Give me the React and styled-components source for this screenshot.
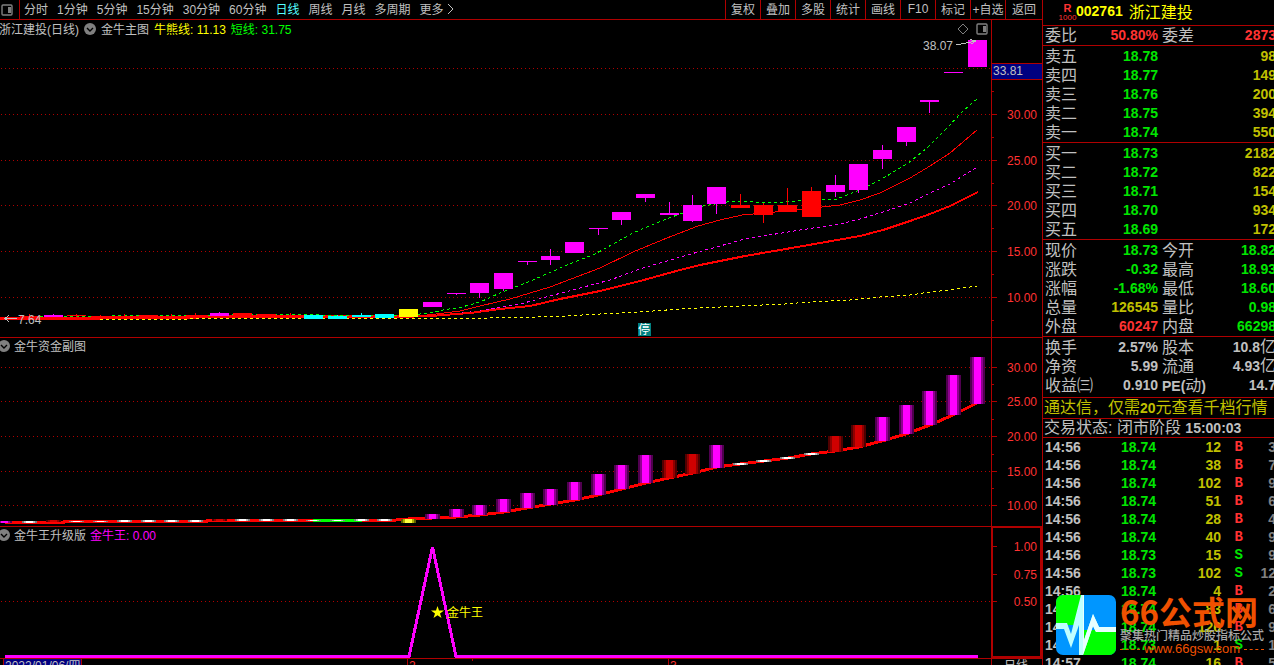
import React from 'react';
import styled, { createGlobalStyle } from 'styled-components';

const GlobalStyle = createGlobalStyle`
  * { box-sizing: border-box; }

  body {
    margin: 0;
    background: #000;
    color: #c0c0c0;
    font: 400 12px "Liberation Sans", "Noto Sans CJK SC", sans-serif;
    overflow: hidden;
  }

  button {
    border: 0;
    padding: 0;
    background: none;
    color: inherit;
    font: inherit;
    white-space: nowrap;
    cursor: pointer;
  }
`;

const LINE = '#b00000';
const RED = '#ff3232';
const GREEN = '#00e600';
const YELLOW = '#c0c000';
const MAGENTA = '#ff00ff';

const Page = styled.div`
  display: grid;
  grid-template-columns: minmax(0, 1fr) 232px;
  grid-template-rows: minmax(0, 1fr);
  height: 100vh;
  overflow: hidden;
`;

const Main = styled.main`
  min-width: 0;
`;

const TopBar = styled.header`
  display: flex;
  height: 20px;
  border-bottom: 1px solid ${LINE};
`;

const ToggleButton = styled.button`
  display: flex;
  align-items: center;
  width: 20px;
  padding-left: 1px;
  border-right: 1px solid ${LINE};
`;

const Periods = styled.nav`
  display: flex;
  flex: 1;
  gap: 9px;
  padding: 0 0 2px 4px;
`;

const PeriodButton = styled.button`
  color: ${({ $active }) => ($active ? '#54ffff' : 'inherit')};
`;

const MoreButton = styled.button`
  display: flex;
  align-items: center;
  gap: 3px;
`;

const Tools = styled.nav`
  display: flex;
`;

const ToolButton = styled.button`
  width: 35px;
  padding-bottom: 2px;
  border-left: 1px solid ${LINE};

  &:last-child { width: 37px; }
`;

const Panel = styled.section`
  position: relative;
  border-bottom: 1px solid ${LINE};
`;

const Chart = styled.svg`
  display: block;
  width: 100%;
  height: auto;
  font-size: 12px;
`;

const Legend = styled.div`
  position: absolute;
  top: 0;
  left: ${({ $tall }) => ($tall ? -1 : -2)}px;
  display: flex;
  align-items: center;
  gap: ${({ $tall }) => ($tall ? 5 : 4)}px;
  height: ${({ $tall }) => ($tall ? 18 : 16)}px;
  white-space: nowrap;

  span { padding-bottom: 2px; }
`;

const LegendValue = styled.span`
  color: ${({ $color }) => $color};
`;

const LegendButton = styled.button`
  display: flex;
`;

const ChartTools = styled.div`
  position: absolute;
  top: 3px;
  right: 54px;
  display: flex;
  gap: 7px;
`;

const Side = styled.aside`
  position: relative;
  border-left: 1px solid ${LINE};
  overflow: hidden;
  white-space: nowrap;
`;

const StockHead = styled.h1`
  display: flex;
  align-items: center;
  height: 26px;
  margin: 0;
  padding: 0 0 3px 16px;
  border-bottom: 1px solid ${LINE};
  color: #ff0;
  font-size: 16px;
  font-weight: 400;
`;

const Rank = styled.span`
  display: flex;
  flex-direction: column;
  align-items: center;
  width: 17px;
  padding-top: 4px;
  color: ${RED};
  font-size: 8px;
  line-height: 9px;

  b {
    font-size: 11px;
    font-weight: 700;
  }
`;

const Code = styled.b`
  margin-right: 6px;
  font-size: 14px;
  font-weight: 700;
`;

const QuoteTable = styled.table`
  table-layout: fixed;
  width: calc(100% + 2px);
  border-collapse: collapse;
  font-size: 16px;

  tr { height: 19px; }

  th, td {
    padding: 0;
    line-height: 19px;
  }

  th {
    width: 50px;
    padding-left: 2px;
    font-weight: 400;
    text-align: left;
  }

  td + th { padding-left: 4px; }
`;

const QuoteBlock = styled.section`
  padding: ${({ $pad }) => $pad || '0'};
  border-bottom: 1px solid ${LINE};
`;

const Value = styled.td`
  width: ${({ $first }) => ($first ? '65px' : 'auto')};
  color: ${({ $color }) => $color || 'inherit'};
  font-size: 14px;
  font-weight: 700;
  text-align: right;

  span {
    font-size: 16px;
    font-weight: 400;
    line-height: 0;
  }
`;

const Latin = styled.b`
  font-size: 14px;
  font-weight: 700;
  line-height: 0;
`;

const Notice = styled.a`
  display: block;
  height: 21px;
  padding-left: 1px;
  border-bottom: 1px solid ${LINE};
  color: ${YELLOW};
  font-size: 16px;
  line-height: 19px;
  text-decoration: none;
`;

const Status = styled.p`
  height: 19px;
  margin: 0;
  padding-left: 1px;
  border-bottom: 1px solid ${LINE};
  font-size: 16px;
  line-height: 17px;
`;

const TradeTable = styled.table`
  table-layout: fixed;
  width: calc(100% + 2px);
  border-collapse: collapse;
  font-size: 14px;
  font-weight: 700;

  tr { height: 18px; }

  td {
    padding: 0;
    line-height: 18px;
    text-align: right;
  }
`;

const TimeCell = styled.td`
  && {
    width: 50px;
    padding-left: 2px;
    text-align: left;
  }
`;

const PriceCell = styled.td`
  width: 63px;
  color: ${GREEN};
`;

const VolumeCell = styled.td`
  width: 65px;
  color: ${YELLOW};
`;

const SideCell = styled.td`
  width: 22px;
  color: ${({ $buy }) => ($buy ? RED : GREEN)};
  font-family: "Liberation Mono", monospace;
`;

const CountCell = styled.td`
  color: #808080;
`;

const Watermark = styled.div`
  position: absolute;
  bottom: 10px;
  left: 13px;
  display: flex;
  gap: 4px;
`;

const Brand = styled.div`
  display: flex;
  flex-direction: column;
  color: #f05000;
`;

const BrandName = styled.strong`
  height: 34px;
  font: 700 33px/32px "Noto Sans CJK SC", sans-serif;
`;

const BrandLine = styled.span`
  height: 14px;
  color: #a8a8a8;
  font-weight: 500;
  line-height: 14px;
`;

const BrandUrl = styled.span`
  display: flex;
  align-items: center;
  gap: 4px;
  font-size: 13px;
  line-height: 12px;

  &::before, &::after {
    content: "";
    width: 20px;
    border-top: 1px dashed #f05000;
  }
`;

const periods = ['分时', '1分钟', '5分钟', '15分钟', '30分钟', '60分钟', '日线', '周线', '月线', '多周期'];
const tools = ['复权', '叠加', '多股', '统计', '画线', 'F10', '标记', '+自选', '返回'];

// x, body top, body bottom, wick top, wick bottom, colour
const candles = [
  [-4, 317, 319, 317, 319, 'red'],
  [20, 316, 319, 314, 319, 'red'],
  [44, 315, 317, 314, 317, MAGENTA],
  [67, 315, 316, 314, 318, 'red'],
  [91, 316, 318, 315, 318, 'red'],
  [115, 316, 318, 314, 318, 'red'],
  [139, 315, 318, 315, 318, 'red'],
  [162, 316, 318, 314, 318, 'red'],
  [186, 315, 318, 313, 318, 'red'],
  [210, 313, 316, 312, 316, MAGENTA],
  [233, 313, 318, 313, 318, 'red'],
  [257, 314, 318, 314, 318, 'red'],
  [281, 315, 318, 313, 318, 'red'],
  [304, 315, 319, 315, 319, '#0ff'],
  [328, 316, 319, 315, 319, '#0ff'],
  [352, 315, 317, 313, 317, '#0ff'],
  [375, 314, 318, 314, 318, '#0ff'],
  [399, 309, 317, 309, 317, '#ff0'],
  [423, 302, 307, 302, 307, MAGENTA],
  [447, 293, 294, 293, 295, MAGENTA],
  [470, 283, 293, 283, 298, MAGENTA],
  [494, 273, 289, 273, 291, MAGENTA],
  [518, 261, 262, 261, 265, MAGENTA],
  [541, 256, 260, 249, 265, MAGENTA],
  [565, 242, 253, 242, 253, MAGENTA],
  [589, 228, 229, 228, 235, MAGENTA],
  [612, 212, 220, 212, 225, MAGENTA],
  [636, 194, 198, 194, 202, MAGENTA],
  [660, 213, 215, 202, 215, MAGENTA],
  [683, 205, 221, 195, 222, MAGENTA],
  [707, 187, 204, 187, 214, MAGENTA],
  [731, 205, 208, 194, 208, 'red'],
  [754, 205, 215, 203, 223, 'red'],
  [778, 205, 212, 188, 212, 'red'],
  [802, 191, 217, 187, 217, 'red'],
  [826, 185, 192, 175, 197, MAGENTA],
  [849, 164, 190, 164, 193, MAGENTA],
  [873, 150, 159, 145, 169, MAGENTA],
  [897, 127, 142, 127, 146, MAGENTA],
  [920, 100, 102, 100, 113, MAGENTA],
  [944, 72, 73, 72, 73, MAGENTA],
  [968, 40, 67, 40, 67, MAGENTA],
];

// x, top, bottom, gradient name
const bars = [
  [-3, 521, 523, 'm'], [22, 521, 523, 'w'], [46, 520, 522, 'r'], [69, 521, 522, 'w'],
  [93, 521, 522, 'w'], [117, 520, 522, 'w'], [141, 520, 522, 'w'], [164, 520, 522, 'w'],
  [188, 520, 522, 'w'], [212, 519, 521, 'r'], [235, 519, 521, 'w'], [259, 519, 521, 'w'],
  [283, 519, 521, 'w'], [306, 520, 521, 'w'], [330, 520, 521, 'w'], [354, 519, 521, 'w'],
  [377, 519, 521, 'w'], [401, 519, 523, 'y'], [425, 514, 519, 'm'], [449, 509, 517, 'm'],
  [472, 505, 515, 'm'], [496, 499, 512, 'm'], [520, 493, 508, 'm'], [543, 489, 505, 'm'],
  [567, 482, 500, 'm'], [591, 474, 495, 'm'], [614, 465, 489, 'm'], [638, 455, 483, 'm'],
  [662, 460, 478, 'r'], [685, 454, 474, 'r'], [709, 445, 468, 'm'], [733, 463, 465, 'w'],
  [756, 460, 462, 'w'], [780, 457, 459, 'w'], [804, 453, 455, 'w'], [828, 436, 452, 'r'],
  [851, 425, 447, 'r'], [875, 417, 441, 'm'], [899, 405, 434, 'm'], [922, 391, 425, 'm'],
  [946, 375, 415, 'm'], [970, 357, 404, 'm'],
];

const gradients = {
  m: ['#500050', '#900090', '#ff00ff'],
  r: ['#500000', '#900000', '#d00000'],
  w: ['#808080', '#c0c0c0', '#ffffff'],
  y: ['#606000', '#b0b000', '#ffff40'],
};

const asks = [['卖五', '18.78', '98'], ['卖四', '18.77', '149'], ['卖三', '18.76', '200'], ['卖二', '18.75', '394'], ['卖一', '18.74', '550']];
const bids = [['买一', '18.73', '2182'], ['买二', '18.72', '822'], ['买三', '18.71', '154'], ['买四', '18.70', '934'], ['买五', '18.69', '172']];

const stats = [
  ['现价', '18.73', GREEN, '今开', '18.82', GREEN],
  ['涨跌', '-0.32', GREEN, '最高', '18.93', GREEN],
  ['涨幅', '-1.68%', GREEN, '最低', '18.60', GREEN],
  ['总量', '126545', YELLOW, '量比', '0.98', GREEN],
  ['外盘', '60247', RED, '内盘', '66298', GREEN],
];

const trades = [
  ['14:56', '18.74', 12, 'B', 3],
  ['14:56', '18.74', 38, 'B', 7],
  ['14:56', '18.74', 102, 'B', 9],
  ['14:56', '18.74', 51, 'B', 6],
  ['14:56', '18.74', 28, 'B', 4],
  ['14:56', '18.74', 40, 'B', 9],
  ['14:56', '18.73', 15, 'S', 9],
  ['14:56', '18.73', 102, 'S', 12],
  ['14:56', '18.74', 4, 'B', 2],
  ['14:56', '18.74', 83, 'B', 6],
  ['14:56', '18.74', 126, 'B', 9],
  ['14:56', '18.73', 1, 'S', 1],
  ['14:57', '18.74', 16, 'B', 5],
];

const SplitIcon = () => (
  <svg width="12" height="12" viewBox="0 0 12 12" aria-hidden="true">
    <rect x="1" y="1" width="10" height="10" rx="1" fill="none" stroke="#808080" strokeWidth="1.4" />
    <rect x="7" y="3" width="3" height="6" fill="#808080" />
  </svg>
);

const FoldButton = () => (
  <LegendButton aria-label="fold">
    <svg width="12" height="12" viewBox="0 0 12 12">
      <circle cx="6" cy="6" r="6" fill="#808080" />
      <path d="M3 5l3 3 3-3" fill="none" stroke="#000" strokeWidth="1.4" />
    </svg>
  </LegendButton>
);

const GridLines = ({ rows }) => rows.map((y) => (
  <line key={y} x1="1" x2="991" y1={y + 0.5} y2={y + 0.5} stroke={LINE} strokeDasharray="1 3" shapeRendering="crispEdges" />
));

const Axis = ({ top, bottom, labels, minors }) => (
  <g>
    <g stroke={LINE} shapeRendering="crispEdges">
      <line x1="991.5" x2="991.5" y1={top} y2={bottom} />
      {labels.map(([y]) => <line key={y} x1="992" x2="997" y1={y + 0.5} y2={y + 0.5} />)}
      {minors.map((y) => <line key={y} x1="992" x2="994" y1={y + 0.5} y2={y + 0.5} />)}
    </g>
    {labels.map(([y, text]) => <text key={y} x="1037" y={y + 5} textAnchor="end" fill={RED}>{text}</text>)}
  </g>
);

const MainChart = () => (
  <Chart viewBox="0 20 1042 317">
    <GridLines rows={[68, 114, 160, 205, 251, 297]} />
    <Axis
      top={20}
      bottom={337}
      labels={[[114, '30.00'], [160, '25.00'], [205, '20.00'], [251, '15.00'], [297, '10.00']]}
      minors={[91, 137, 183, 228, 274, 320]}
    />
    <g fill="none" shapeRendering="crispEdges">
      <polyline stroke="red" points="408,317 436,314 460,311 480,306 510,299 550,287 600,268 633,252 667,238 698,226 720,220 742,215 775,212 822,207 840,205 860,200 880,193 910,178 930,166 950,153 977,130" />
      <polyline stroke={MAGENTA} strokeDasharray="3 3" points="408,317 450,314 480,311 520,304 550,296 580,288 610,280 640,269 670,260 698,252 720,246 745,239 800,230 840,224 860,219 883,212 910,203 930,193 950,184 977,167" />
      <polyline stroke="red" strokeWidth="3" points="0,318.5 100,318.5 101,317.5 195,317.5 196,316.5 399,316.5" />
      <polyline stroke="red" strokeWidth="2" points="399,317 430,316 470,313 500,309 530,306 560,299 600,291 640,281 680,270 700,265 720,261 745,256 780,250 820,243 860,236 883,230 910,221 930,214 950,206 978,192" />
      <polyline stroke="#0f0" strokeDasharray="3 3" points="40,317 66,316.500 110,316.500 112,315.500 200,315.500 260,314.500 304,314.500 350,316 408,315 420,314 430,313 443,310 462,307 480,302 500,293 533,280 567,265 595,254 613,244 633,233 661,221 680,214 703,206 727,202 743,201 768,203 798,201 820,199 837,199 847,195 860,190 880,180 907,164 927,148 947,128 963,111 977,99" />
      <polyline stroke="#ff0" strokeDasharray="3 3" points="100,319.500 185,319.500 195,318.500 408,318.500 488,318 535,317 565,316 600,314 640,312 680,309 740,306 785,304 810,302 850,300 880,297 910,295 930,292 950,290 977,286" />
    </g>
    <g shapeRendering="crispEdges">
      {candles.map(([x, top, bottom, high, low, color]) => (
        <g key={x} fill={color}>
          <rect x={x + 9} y={high} width="1" height={low - high} />
          <rect x={x} y={top} width="19" height={bottom - top} />
        </g>
      ))}
    </g>
    <g fill="none" stroke="#c0c0c0" shapeRendering="crispEdges">
      <path d="M5 318.5H17M9 315L5 318.5L9 322" />
      <path d="M956 45L976 41M970 39.5L976 41L971 44" />
    </g>
    <text x="18" y="324" fill="#c0c0c0">7.64</text>
    <text x="923" y="50" fill="#c0c0c0">38.07</text>
    <rect x="638" y="323" width="13" height="13" fill="#008080" />
    <text x="638" y="334" fill="#fff">停</text>
    <rect x="992" y="63" width="50" height="17" fill={LINE} />
    <rect x="992" y="64" width="50" height="15" fill="#000080" />
    <text x="993" y="75" fill="#c0c0c0">33.81</text>
  </Chart>
);

const FundChart = () => (
  <Chart viewBox="0 338 1042 188">
    <defs>
      {Object.entries(gradients).map(([name, [edge, mid, core]]) => (
        <linearGradient key={name} id={`bar-${name}`}>
          <stop offset="0" stopColor={edge} />
          <stop offset="0.13" stopColor={edge} />
          <stop offset="0.13" stopColor={mid} />
          <stop offset="0.27" stopColor={mid} />
          <stop offset="0.27" stopColor={core} />
          <stop offset="0.76" stopColor={core} />
          <stop offset="0.76" stopColor={mid} />
          <stop offset="0.88" stopColor={mid} />
          <stop offset="0.88" stopColor={edge} />
        </linearGradient>
      ))}
    </defs>
    <GridLines rows={[367, 401, 436, 471, 505]} />
    <Axis
      top={338}
      bottom={526}
      labels={[[367, '30.00'], [401, '25.00'], [436, '20.00'], [471, '15.00'], [505, '10.00']]}
      minors={[384, 419, 454, 488]}
    />
    <g shapeRendering="crispEdges">
      <polyline fill="none" stroke="red" strokeWidth="3" points="5,522 64,522 65,521 207,521 208,520 396,520 408,519 432,518 456,517 480,515 504,512 527,508 551,504 575,500 598,495 622,489 646,483 669,478 693,473 717,467 740,464 764,461 788,458 811,454 835,451 859,447 882,441 906,434 930,425 953,415 977,403" />
      <rect x="313" y="519" width="49" height="3" fill="#0f0" />
      {bars.map(([x, top, bottom, name]) => (
        <rect key={x} x={x} y={top} width="15" height={bottom - top} fill={`url(#bar-${name})`} />
      ))}
    </g>
  </Chart>
);

const SignalChart = () => (
  <Chart viewBox="0 527 1042 131">
    <GridLines rows={[601]} />
    <Axis top={527} bottom={658} labels={[[546, '1.00'], [574, '0.75'], [601, '0.50']]} minors={[]} />
    <rect x="992" y="527" width="49" height="130" fill="none" stroke={LINE} strokeWidth="2" />
    <polyline fill="none" stroke={MAGENTA} strokeWidth="3" shapeRendering="crispEdges" points="5,656.5 409,656.5 432.5,547 456,656.5 978,656.5" />
    <path d="M437.500 606l1.500 4.500h5l-4 3 1.500 4.500-4-2.800-4 2.800 1.500-4.500-4-3h5z" fill="#ff0" />
    <text x="447" y="617" fill="#ff0">金牛王</text>
  </Chart>
);

const TimeAxis = () => (
  <Chart viewBox="0 659 1042 16">
    <rect x="3" y="659" width="79" height="16" fill="#000080" />
    <path d="M3.500 659v16M81.500 659v16M407.500 659v16M472.500 659v2M668.500 659v16M991.500 659v16" stroke={LINE} shapeRendering="crispEdges" />
    <text x="5" y="670" fill="#c0c0c0">2022/01/06/四</text>
    <text x="409" y="670" fill={RED}>2</text>
    <text x="670" y="670" fill={RED}>3</text>
    <text x="1004" y="670" fill="#c0c0c0">日线</text>
  </Chart>
);

const Logo = () => (
  <svg width="60" height="60" viewBox="0 0 60 60" aria-hidden="true">
    <clipPath id="logo-box"><rect width="60" height="60" rx="7" /></clipPath>
    <g clipPath="url(#logo-box)">
      <rect width="60" height="60" fill="#0096ff" />
      <path d="M0 0H27V30H0zM27 35H60V60H27z" fill="#0f0" />
      <path d="M0 28H11L15 39L25 0H28V45L37 19L43 32H60V37H40L37 31L27 60H23V30L15 53L8 34H0z" fill="#c0ffff" />
      <path d="M27 0H28V45L37 19L43 32H60V37H40L37 31L27 60z" fill="#e8ffff" />
    </g>
  </svg>
);

const DepthTable = ({ rows }) => (
  <QuoteTable>
    <tbody>
      {rows.map(([label, price, volume]) => (
        <tr key={label}>
          <th scope="row">{label}</th>
          <Value $first $color={GREEN}>{price}</Value>
          <Value $color={YELLOW}>{volume}</Value>
        </tr>
      ))}
    </tbody>
  </QuoteTable>
);

const QuotePanel = () => (
  <Side>
    <StockHead>
      <Rank><b>R</b>1000</Rank>
      <Code>002761</Code>
      浙江建投
    </StockHead>
    <QuoteBlock>
      <QuoteTable>
        <tbody>
          <tr>
            <th scope="row">委比</th>
            <Value $first $color={RED}>50.80%</Value>
            <th scope="row">委差</th>
            <Value $color={RED}>2873</Value>
          </tr>
        </tbody>
      </QuoteTable>
    </QuoteBlock>
    <QuoteBlock $pad="1px 0 0"><DepthTable rows={asks} /></QuoteBlock>
    <QuoteBlock $pad="1px 0 0"><DepthTable rows={bids} /></QuoteBlock>
    <QuoteBlock $pad="1px 0 0">
      <QuoteTable>
        <tbody>
          {stats.map(([label, value, color, label2, value2, color2]) => (
            <tr key={label}>
              <th scope="row">{label}</th>
              <Value $first $color={color}>{value}</Value>
              <th scope="row">{label2}</th>
              <Value $color={color2}>{value2}</Value>
            </tr>
          ))}
        </tbody>
      </QuoteTable>
    </QuoteBlock>
    <QuoteBlock $pad="1px 0 2px">
      <QuoteTable>
        <tbody>
          <tr>
            <th scope="row">换手</th>
            <Value $first>2.57%</Value>
            <th scope="row">股本</th>
            <Value>10.8<span>亿</span></Value>
          </tr>
          <tr>
            <th scope="row">净资</th>
            <Value $first>5.99</Value>
            <th scope="row">流通</th>
            <Value>4.93<span>亿</span></Value>
          </tr>
          <tr>
            <th scope="row">收益㈢</th>
            <Value $first>0.910</Value>
            <th scope="row"><Latin>PE(</Latin>动<Latin>)</Latin></th>
            <Value>14.7</Value>
          </tr>
        </tbody>
      </QuoteTable>
    </QuoteBlock>
    <Notice href="#level2">通达信，仅需<Latin>20</Latin>元查看千档行情</Notice>
    <Status>交易状态: 闭市阶段 <Latin>15:00:03</Latin></Status>
    <TradeTable>
      <tbody>
        {trades.map(([time, price, volume, side, count], i) => (
          <tr key={i}>
            <TimeCell>{time}</TimeCell>
            <PriceCell>{price}</PriceCell>
            <VolumeCell>{volume}</VolumeCell>
            <SideCell $buy={side === 'B'}>{side}</SideCell>
            <CountCell>{count}</CountCell>
          </tr>
        ))}
      </tbody>
    </TradeTable>
    <Watermark>
      <Logo />
      <Brand>
        <BrandName>66公式网</BrandName>
        <BrandLine>聚集热门精品炒股指标公式</BrandLine>
        <BrandUrl>www.66gsw.com</BrandUrl>
      </Brand>
    </Watermark>
  </Side>
);

const App = () => {
  return (
    <>
      <GlobalStyle />
      <Page>
        <Main>
          <TopBar>
            <ToggleButton aria-label="sidebar"><SplitIcon /></ToggleButton>
            <Periods>
              {periods.map((name) => (
                <PeriodButton key={name} $active={name === '日线'}>{name}</PeriodButton>
              ))}
              <MoreButton>
                更多
                <svg width="7" height="12" viewBox="0 0 7 12" aria-hidden="true">
                  <path d="M1 1l5 5-5 5" fill="none" stroke="#c0c0c0" />
                </svg>
              </MoreButton>
            </Periods>
            <Tools>
              {tools.map((name) => <ToolButton key={name}>{name}</ToolButton>)}
            </Tools>
          </TopBar>
          <Panel>
            <MainChart />
            <Legend $tall>
              <span>浙江建投(日线)</span>
              <FoldButton />
              <span>金牛主图</span>
              <LegendValue $color="#ff0">牛熊线: 11.13</LegendValue>
              <LegendValue $color="#0f0">短线: 31.75</LegendValue>
            </Legend>
            <ChartTools>
              <svg width="12" height="12" viewBox="0 0 12 12" aria-hidden="true">
                <path d="M6 1l5 5-5 5-5-5z" fill="none" stroke="#808080" />
              </svg>
              <SplitIcon />
            </ChartTools>
          </Panel>
          <Panel>
            <FundChart />
            <Legend>
              <FoldButton />
              <span>金牛资金副图</span>
            </Legend>
          </Panel>
          <Panel>
            <SignalChart />
            <Legend>
              <FoldButton />
              <span>金牛王升级版</span>
              <LegendValue $color={MAGENTA}>金牛王: 0.00</LegendValue>
            </Legend>
          </Panel>
          <TimeAxis />
        </Main>
        <QuotePanel />
      </Page>
    </>
  );
};

export default App;
